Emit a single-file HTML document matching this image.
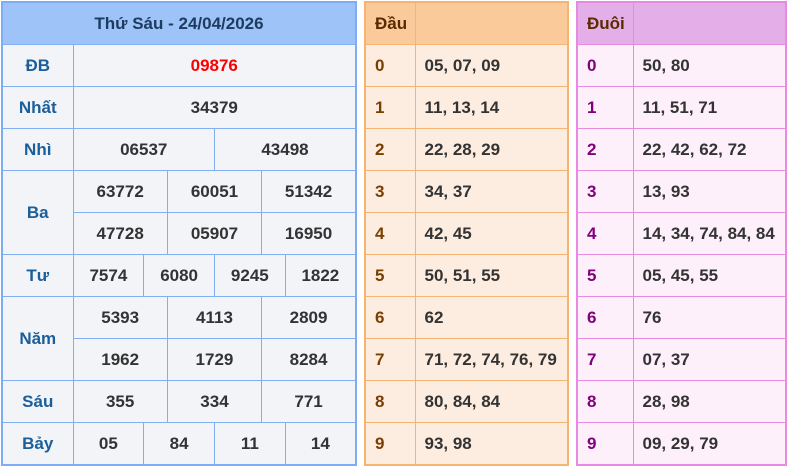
<!DOCTYPE html>
<html><head><meta charset="utf-8"><style>
body{margin:0;width:789px;height:468px;background:#fff;font-family:"Liberation Sans",Arial,sans-serif;font-weight:bold;font-size:17px;position:relative;overflow:hidden}
table{position:absolute;border-collapse:collapse;table-layout:fixed}
td{padding:0;height:41px;text-align:center;color:#333}
#L{left:1px;top:1px;width:356px;border:2px solid #7eadf5}
#L td{border:1px solid #82aef2;background:#f2f4f8}
#L td.h{background:#9dc3f9;color:#1e3c60;font-size:17px}
#L td.lb{color:#1b5e99;font-size:17px}
#L td.r{color:#f00}
#M{left:364px;top:1px;width:205px;border:2px solid #f6b473}
#M td{border:1px solid #f6b473;background:#fdede0;text-align:left;padding-left:9px}
#M td.h{background:#fbca9b;color:#5a2a00}
#M td.k{color:#7a3e00}
#R{left:576px;top:1px;width:211px;border:2px solid #e68be0}
#R td{border:1px solid #e68be0;background:#fdf0fa;text-align:left;padding-left:9px}
#R td.h{background:#e4afe8;color:#5a2a00}
#R td.k{color:#82007e}
</style></head><body>
<table id="L"><colgroup><col style="width:71px"><col span="12"></colgroup>
<tr><td class="h" colspan="13">Thứ Sáu - 24/04/2026</td></tr>
<tr><td class="lb">ĐB</td><td class="r" colspan="12">09876</td></tr>
<tr><td class="lb">Nhất</td><td colspan="12">34379</td></tr>
<tr><td class="lb">Nhì</td><td colspan="6">06537</td><td colspan="6">43498</td></tr>
<tr><td class="lb" rowspan="2">Ba</td><td colspan="4">63772</td><td colspan="4">60051</td><td colspan="4">51342</td></tr>
<tr><td colspan="4">47728</td><td colspan="4">05907</td><td colspan="4">16950</td></tr>
<tr><td class="lb">Tư</td><td colspan="3">7574</td><td colspan="3">6080</td><td colspan="3">9245</td><td colspan="3">1822</td></tr>
<tr><td class="lb" rowspan="2">Năm</td><td colspan="4">5393</td><td colspan="4">4113</td><td colspan="4">2809</td></tr>
<tr><td colspan="4">1962</td><td colspan="4">1729</td><td colspan="4">8284</td></tr>
<tr><td class="lb">Sáu</td><td colspan="4">355</td><td colspan="4">334</td><td colspan="4">771</td></tr>
<tr><td class="lb">Bảy</td><td colspan="3">05</td><td colspan="3">84</td><td colspan="3">11</td><td colspan="3">14</td></tr>
</table>
<table id="M"><colgroup><col style="width:50px"><col></colgroup>
<tr><td class="h">Đầu</td><td class="h"></td></tr>
<tr><td class="k">0</td><td>05, 07, 09</td></tr>
<tr><td class="k">1</td><td>11, 13, 14</td></tr>
<tr><td class="k">2</td><td>22, 28, 29</td></tr>
<tr><td class="k">3</td><td>34, 37</td></tr>
<tr><td class="k">4</td><td>42, 45</td></tr>
<tr><td class="k">5</td><td>50, 51, 55</td></tr>
<tr><td class="k">6</td><td>62</td></tr>
<tr><td class="k">7</td><td>71, 72, 74, 76, 79</td></tr>
<tr><td class="k">8</td><td>80, 84, 84</td></tr>
<tr><td class="k">9</td><td>93, 98</td></tr>
</table>
<table id="R"><colgroup><col style="width:56px"><col></colgroup>
<tr><td class="h">Đuôi</td><td class="h"></td></tr>
<tr><td class="k">0</td><td>50, 80</td></tr>
<tr><td class="k">1</td><td>11, 51, 71</td></tr>
<tr><td class="k">2</td><td>22, 42, 62, 72</td></tr>
<tr><td class="k">3</td><td>13, 93</td></tr>
<tr><td class="k">4</td><td>14, 34, 74, 84, 84</td></tr>
<tr><td class="k">5</td><td>05, 45, 55</td></tr>
<tr><td class="k">6</td><td>76</td></tr>
<tr><td class="k">7</td><td>07, 37</td></tr>
<tr><td class="k">8</td><td>28, 98</td></tr>
<tr><td class="k">9</td><td>09, 29, 79</td></tr>
</table>
</body></html>
